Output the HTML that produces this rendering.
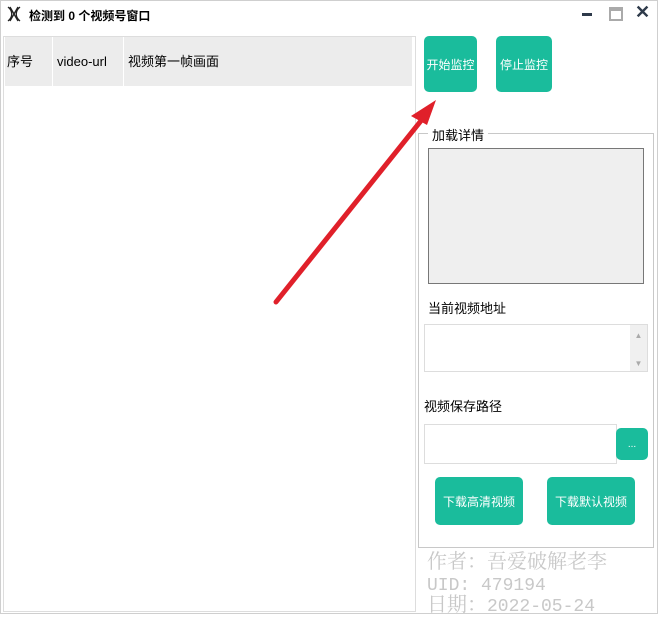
<!DOCTYPE html>
<html><head><meta charset="utf-8"><style>
*{box-sizing:border-box;margin:0;padding:0}
body{width:658px;height:614px;position:relative;background:#fff;font-family:"Liberation Sans","Noto Sans CJK SC",sans-serif;font-size:13px;color:#000;overflow:hidden}
.a{position:absolute}
.btn{position:absolute;background:#1abc9c;color:#fff;border-radius:5px;display:flex;align-items:center;justify-content:center;font-size:12px}
.wm{position:absolute;left:427px;color:#c8c8c8;font-family:"Noto Serif CJK SC",serif;font-size:20px;line-height:22px;white-space:nowrap}
.wm span{font-family:"Liberation Mono",monospace;font-size:18px}
.h{position:absolute;top:37px;height:49px;line-height:49px}
</style></head><body>
<div class="a" style="left:0;top:0;width:658px;height:614px;border:1px solid #cfcfcf"></div>
<svg class="a" style="left:5px;top:5px" width="18" height="18"><path d="M3 2 C8 6 8 12 3 16 M15 2 C10 6 10 12 15 16 M5 2 L13 16 M13 2 L5 16" stroke="#222" stroke-width="1.3" fill="none"/></svg>
<div class="a" style="left:29px;top:7px;font-weight:bold;font-size:12px">检测到 0 个视频号窗口</div>
<div class="a" style="left:582px;top:13px;width:10px;height:3px;background:#2e3a4a"></div>
<div class="a" style="left:609px;top:7px;width:14px;height:14px;border:2px solid #aaa;border-top-width:4px"></div>
<div class="a" style="left:635px;top:2px;font-size:18px;font-weight:bold;color:#2e3a4a">✕</div>
<div class="a" style="left:3px;top:36px;width:413px;height:576px;border:1px solid #ddd"></div>
<div class="a" style="left:5px;top:37px;width:407px;height:49px;background:#ececec"></div>
<div class="a" style="left:52px;top:37px;width:1px;height:49px;background:#fff"></div>
<div class="a" style="left:123px;top:37px;width:1px;height:49px;background:#fff"></div>
<div class="h" style="left:7px">序号</div>
<div class="h" style="left:57px">video-url</div>
<div class="h" style="left:128px">视频第一帧画面</div>
<div class="btn" style="left:424px;top:36px;width:53px;height:56px">开始监控</div>
<div class="btn" style="left:496px;top:36px;width:56px;height:56px">停止监控</div>
<div class="a" style="left:418px;top:133px;width:236px;height:415px;border:1px solid #c8c8c8"></div>
<div class="a" style="left:428px;top:125px;background:#fff;padding:0 4px">加载详情</div>
<div class="a" style="left:428px;top:148px;width:216px;height:136px;background:#efefef;border:1px solid #777"></div>
<div class="a" style="left:428px;top:298px">当前视频地址</div>
<div class="a" style="left:424px;top:324px;width:224px;height:48px;border:1px solid #ddd"></div>
<div class="a" style="left:630px;top:325px;width:17px;height:46px;background:#f0f0f0;color:#aaa;font-size:8px;text-align:center;line-height:14px;padding-top:4px">▲<br><br>▼</div>
<div class="a" style="left:424px;top:396px">视频保存路径</div>
<div class="a" style="left:424px;top:424px;width:193px;height:40px;border:1px solid #ddd"></div>
<div class="btn" style="left:616px;top:428px;width:32px;height:32px;font-size:10px">...</div>
<div class="btn" style="left:435px;top:477px;width:88px;height:48px">下载高清视频</div>
<div class="btn" style="left:547px;top:477px;width:88px;height:48px">下载默认视频</div>
<div class="wm" style="top:549px">作者：吾爱破解老李</div>
<div class="wm" style="top:571px"><span>UID: 479194</span></div>
<div class="wm" style="top:592px">日期：<span>2022-05-24</span></div>
<svg class="a" style="left:0;top:0" width="658" height="614"><line x1="276" y1="302" x2="424" y2="117" stroke="#e0202a" stroke-width="5" stroke-linecap="round"/><polygon points="436,100 411,116 427,125" fill="#e0202a"/></svg>
</body></html>
